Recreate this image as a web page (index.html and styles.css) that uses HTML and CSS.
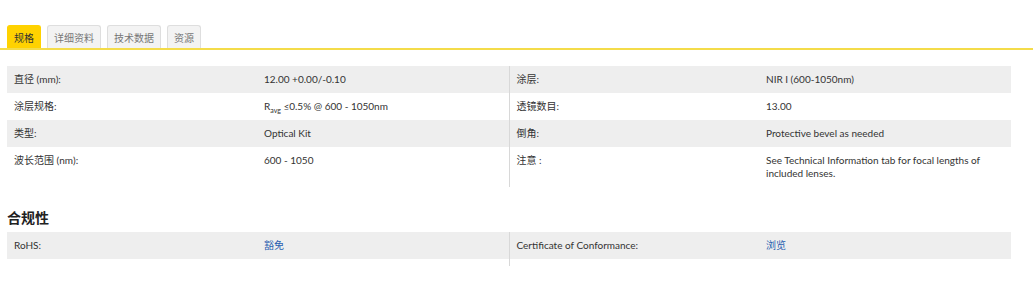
FILE: index.html
```html
<!DOCTYPE html>
<html lang="zh">
<head>
<meta charset="utf-8">
<link rel="stylesheet" href="styles.css">
</head>
<body>
<div class="tabs">
  <span class="tab active">规格</span>
  <span class="tab">详细资料</span>
  <span class="tab">技术数据</span>
  <span class="tab">资源</span>
</div>
<div class="content">
  <table class="specs">
    <colgroup><col class="c-lbl"><col class="c-val"><col class="c-lbl"><col class="c-val"></colgroup>
    <tr class="grey">
      <td>直径 (mm):</td><td>12.00 +0.00/-0.10</td>
      <td class="div">涂层:</td><td>NIR I (600-1050nm)</td>
    </tr>
    <tr>
      <td>涂层规格:</td><td>R<sub>avg</sub> ≤0.5% @ 600 - 1050nm</td>
      <td class="div">透镜数目:</td><td>13.00</td>
    </tr>
    <tr class="grey">
      <td>类型:</td><td>Optical Kit</td>
      <td class="div">倒角:</td><td>Protective bevel as needed</td>
    </tr>
    <tr>
      <td>波长范围 (nm):</td><td>600 - 1050</td>
      <td class="div">注意 :</td><td>See Technical Information tab for focal lengths of included lenses.</td>
    </tr>
  </table>
  <h3 class="heading">合规性</h3>
  <table class="specs">
    <colgroup><col class="c-lbl"><col class="c-val"><col class="c-lbl"><col class="c-val"></colgroup>
    <tr class="grey">
      <td>RoHS:</td><td><a class="link" href="#">豁免</a></td>
      <td class="div">Certificate of Conformance:</td><td><a class="link" href="#">浏览</a></td>
    </tr>
    <tr class="spacer"><td></td><td></td><td class="div"></td><td></td></tr>
  </table>
</div>
</body>
</html>
```

FILE: styles.css
```css
html, body {
  margin: 0;
  padding: 0;
  background: #fff;
  font-family: Lato, "Noto Sans CJK SC", sans-serif;
  color: #333;
}

.tabs {
  display: flex;
  gap: 6px;
  padding: 25px 0 0 7px;
  border-bottom: 2px solid #f4dc4a;
  margin-right: 1px;
}

.tab {
  display: block;
  height: 23px;
  line-height: 24px;
  padding: 0 6px;
  font-size: 10px;
  color: #777;
  background: #f3f3f3;
  border: 1px solid #dedede;
  border-bottom: none;
  border-radius: 3px 3px 0 0;
  box-sizing: border-box;
}

.tab.active {
  background: #ffd200;
  border-color: #ffd200;
  color: #333;
}

.content {
  width: 1004px;
  margin-left: 7px;
  padding-top: 16px;
}

.specs {
  width: 100%;
  border-collapse: collapse;
  table-layout: fixed;
  font-size: 10px;
}

.c-lbl { width: 250px; }
.c-val { width: 252px; }
col.c-val:last-child { width: auto; }

.specs td {
  padding: 7px 7px;
  line-height: 13px;
  vertical-align: top;
}

.specs td.div {
  border-left: 1px solid #d8d8d8;
}

.grey td {
  background: #eeeeee;
}

.spacer td {
  padding: 0;
  height: 7px;
}

sub {
  font-size: 7px;
  line-height: 0;
}

.heading {
  margin: 23px 0 6px 0;
  font-size: 14px;
  line-height: 16px;
  font-weight: 700;
  color: #222;
}

.link {
  color: #2a5fb0;
  text-decoration: none;
}
```
